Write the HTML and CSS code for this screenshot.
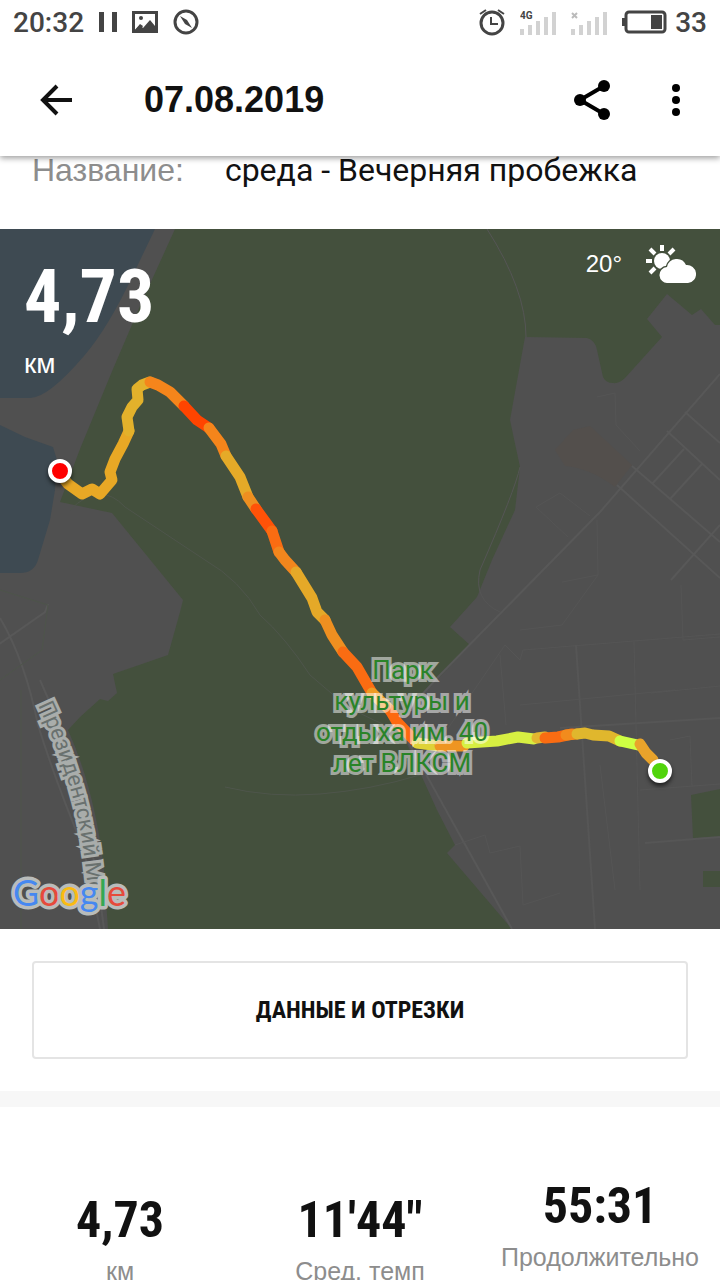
FILE: index.html
```html
<!DOCTYPE html>
<html lang="ru">

<head>
    <meta charset="UTF-8">
    <meta name="viewport" content="width=device-width, initial-scale=1.0">
    <title>07.08.2019</title>
    <link rel="stylesheet" href="styles.css">
</head>

<body>

    <div class="screen">
        <div class="status-bar">
            <div class="status-group">
                <span>20:32</span>
                <svg width="18" height="26" viewBox="0 0 18 26"><path d="M0 3h5v20H0zM13 3h5v20h-5z" fill="#444"/></svg>
                <svg width="26" height="26" viewBox="0 0 26 26">
                    <path fill-rule="evenodd" d="M0 2h26v22H0zM3 5v16l5-5 3 3 7-8 5 6V5z" fill="#444"/>
                    <path d="M2 22l6-7 3 2-3 5z" fill="#444"/>
                    <circle cx="9" cy="9" r="2" fill="#444"/>
                </svg>
                <svg width="26" height="26" viewBox="0 0 26 26">
                    <circle cx="13" cy="13" r="11" fill="none" stroke="#444" stroke-width="3"/>
                    <path d="M7 7l7 4 5 8-7-4z" fill="#444"/>
                </svg>
            </div>
            <div class="status-group">
                <svg width="26" height="28" viewBox="0 0 26 28">
                    <circle cx="13" cy="15" r="11" fill="none" stroke="#444" stroke-width="3"/>
                    <path d="M12 9v7h7M1 6l6-4M25 6l-6-4" fill="none" stroke="#444" stroke-width="2"/>
                </svg>
                <svg width="36" height="26" viewBox="0 0 36 26">
                    <path d="M0 20h4v6H0zM8 16h4v10H8zM16 12h4v14h-4zM24 8h4v18h-4zM32 3h4v23h-4z" fill="#d2d2d2"/>
                    <text x="0" y="10" class="network">4G</text>
                </svg>
                <svg width="36" height="26" viewBox="0 0 36 26">
                    <path d="M0 20h4v6H0zM8 16h4v10H8zM16 12h4v14h-4zM24 8h4v18h-4zM32 3h4v23h-4z" fill="#d2d2d2"/>
                    <path d="M1 4l5 5M6 4L1 9" stroke="#bbb" stroke-width="2"/>
                </svg>
                <div class="battery">
                    <svg width="45" height="24" viewBox="0 0 45 24">
                        <rect x="4" y="2" width="39" height="20" rx="3" fill="none" stroke="#444" stroke-width="3"/>
                        <path d="M0 8h3v8H0zM29 5h11v14H29z" fill="#444"/>
                    </svg>
                    <span>33</span>
                </div>
            </div>
        </div>

        <header class="app-bar">
            <button class="icon-button" aria-label="Назад">
                <svg width="34" height="34" viewBox="0 0 34 34"><path d="M17 3L3 17l14 14M3 17h29" fill="none" stroke="#111" stroke-width="4"/></svg>
            </button>
            <h1>07.08.2019</h1>
            <button class="icon-button" aria-label="Поделиться">
                <svg width="36" height="40" viewBox="0 0 36 40">
                    <path d="M30 6L6 20l24 14" fill="none" stroke="#000" stroke-width="4"/>
                    <circle cx="30" cy="6" r="6"/>
                    <circle cx="6" cy="20" r="6"/>
                    <circle cx="30" cy="34" r="6"/>
                </svg>
            </button>
            <button class="icon-button menu-button" aria-label="Меню">
                <svg width="8" height="32" viewBox="0 0 8 32">
                    <circle cx="4" cy="4" r="4"/>
                    <circle cx="4" cy="16" r="4"/>
                    <circle cx="4" cy="28" r="4"/>
                </svg>
            </button>
        </header>

        <div class="run-name">
            <span class="run-label">Название:</span>
            <span class="run-value">среда - Вечерняя пробежка</span>
        </div>

        <div class="map">
            <svg class="map-canvas" viewBox="0 229 720 700">
                <rect y="229" width="720" height="700" fill="#505050"/>

                <!-- water -->
                <g fill="#3e4a52">
                    <path d="M0 229H155L132 277Q108 328 84 356 48 398 30 398H0z"/>
                    <path d="M0 425L25 437 53 447 57 460 55 490 50 520 38 560Q34 573 20 573H0z"/>
                </g>

                <!-- park -->
                <g fill="#44503d">
                    <path d="M175 229L140 306 113 369 80 449 60 502 112 513 183 600 180 612 168 655 113 674 117 693 108 701 100 699 80 717 68 730Q95 790 104 870L108 929H512L447 853 455 845 437 810 397 722 470 645 450 627 477 597 492 560 515 510 520 467 510 420 525 337 587 338Q595 340 597 350L603 377Q606 383 613 383 619 384 625 378L662 337 647 319 667 294 692 315 701 309 715 325H720V229z"/>
                    <path d="M691 795L720 789V837L693 838zM703 871H720V887H703z"/>
                </g>
                <path d="M555 450L573 430 590 426 632 465 615 487Q590 468 565 466z" fill="#534f4c"/>

                <!-- streets -->
                <g fill="none" stroke="#585858" stroke-width="2">
                    <path d="M720 374L600 512 440 675 397 722 512 929M685 412L720 443M667 431L720 480M632 466L720 542M617 485L720 578M684 449L652 484M702 464L670 499M671 580L720 525"/>
                    <path d="M0 618Q25 660 38 725 55 780 84 850L100 929M-2 645L45 612 48 604M40 680Q86 780 104 929"/>
                    <path d="M576 645L595 929M560 728L720 718M645 843L720 837" stroke="#565656"/>
                </g>
                <g fill="none" stroke="#555" stroke-width="1">
                    <path d="M487 229Q526 290 526 337M520 467Q515 490 480 570 473 600 500 612M597 397L615 393 616 425 640 451M536 507L560 493 590 516M536 507L568 537M597 520L598 575 562 582M598 575L562 625 520 630M440 740L505 645 520 660 523 650 720 634M500 655L506 725M634 642L640 890M520 705L675 690M600 765L615 890M640 790L720 784M455 845L485 835 490 853 520 846 523 905 560 893M681 585L683 640 720 637M651 693L720 686M670 740L690 736 692 787"/>
                    <path d="M70 510Q100 480 125 507L205 560Q240 580 260 615 285 637 310 675L345 705Q370 720 410 735M225 787Q270 798 320 794T420 775M21 690V929M0 590L48 605 42 650 0 680" stroke="#4e554b"/>
                </g>

                <!-- route -->
                <g class="route">
                    <path stroke="#e8a825" d="M60 474L68 484 82 494 92 489 100 494 112 480 110 472 115 459 123 444 129 431"/>
                    <path stroke="#e3b12b" d="M129 431L127 417 132 407 138 400 137 389 142 385 150 382"/>
                    <path stroke="#f5851b" d="M150 382L158 385 170 392 184 406"/>
                    <path stroke="#ff4400" d="M184 406L197 420 209 428"/>
                    <path stroke="#f5851b" d="M209 428L221 444 226 456"/>
                    <path stroke="#e5aa28" d="M226 456L240 477 248 497"/>
                    <path stroke="#ee8f20" d="M248 497L256 509"/>
                    <path stroke="#ff5208" d="M256 509L272 531"/>
                    <path stroke="#fa6c12" d="M272 531L279 552"/>
                    <path stroke="#f2861d" d="M279 552L285 560 296 572"/>
                    <path stroke="#e5a928" d="M296 572L304 585 312 598 317 612 325 620"/>
                    <path stroke="#ef8f20" d="M325 620L332 635 343 652"/>
                    <path stroke="#fa6c12" d="M343 652L357 667 372 693"/>
                    <path stroke="#ee9b24" d="M372 693L390 710"/>
                    <path stroke="#fd6910" d="M390 710L397 722 415 741"/>
                    <path stroke="#dfd237" d="M417 743L440 746"/>
                    <path stroke="#ee9522" d="M440 746H464"/>
                    <path stroke="#d7ef42" d="M467 743L497 741 518 737 534 739"/>
                    <path stroke="#e2b630" d="M537 738L545 737"/>
                    <path stroke="#fa6c12" d="M545 738L558 737 572 734"/>
                    <path stroke="#f28b1d" d="M566 735L577 734"/>
                    <path stroke="#e0b72d" d="M577 734L585 733 593 735 609 736 620 741"/>
                    <path stroke="#ceff43" d="M620 741L638 745"/>
                    <path stroke="#e9a32b" d="M640 744L646 753 653 760"/>
                </g>
                <g class="marker">
                    <circle cx="60" cy="471" r="10" fill="#fe0000"/>
                    <circle cx="660" cy="771" r="10" fill="#51d40c"/>
                </g>

                <g class="park-name">
                    <text x="403" y="679">Парк</text>
                    <text x="402" y="710">культуры и</text>
                    <text x="402" y="741">отдыха им. 40</text>
                    <text x="402" y="772">лет ВЛКСМ</text>
                </g>
                <path id="bridge" d="M38 705Q66 765 77 815 85 850 91 920" fill="none"/>
                <text class="street-name"><textPath href="#bridge">Президентский Мо</textPath></text>
                <text class="google" x="13" y="906"><tspan fill="#4688f1">G</tspan><tspan fill="#e64a3b">o</tspan><tspan fill="#fabb12">o</tspan><tspan fill="#4688f1">g</tspan><tspan fill="#34a853">l</tspan><tspan fill="#e64a3b">e</tspan></text>
            </svg>

            <div class="map-overlay">
                <div class="distance">
                    <div class="distance-value">4,73</div>
                    <div class="distance-unit">км</div>
                </div>
                <div class="weather">
                    <span>20°</span>
                    <svg width="50" height="38" viewBox="0 0 50 38">
                        <path d="M16 0v6M4 4l5 5M28 4l-5 5M0 16h6M4 28l5-5" stroke="#fff" stroke-width="4"/>
                        <circle cx="16" cy="16" r="8" fill="#fff"/>
                        <path d="M22 38a8 8 0 0 1-1-16 10 10 0 0 1 19-2 9 9 0 0 1 2 18z" fill="#fff" stroke="#44503d" stroke-width="3" paint-order="stroke"/>
                    </svg>
                </div>
            </div>
        </div>

        <div class="actions">
            <button class="details-button">ДАННЫЕ И ОТРЕЗКИ</button>
        </div>

        <div class="stats">
            <div class="stat">
                <div class="stat-value">4,73</div>
                <div class="stat-label">км</div>
            </div>
            <div class="stat">
                <div class="stat-value">11'44"</div>
                <div class="stat-label">Сред. темп</div>
            </div>
            <div class="stat stat-raised">
                <div class="stat-value">55:31</div>
                <div class="stat-label">Продолжительно</div>
            </div>
        </div>
    </div>

</body>

</html>
```
FILE: styles.css
```css
* {
    box-sizing: border-box;
    margin: 0;
    padding: 0;
}

body {
    font-family: "Liberation Sans", Arial, sans-serif;
    background-color: #fff;
    color: #111;
}

svg {
    display: block;
    flex-shrink: 0;
}

button {
    font: inherit;
    color: inherit;
    background: none;
    border: none;
    cursor: pointer;
}

.screen {
    height: 100vh;
    overflow: hidden;
}

.status-bar {
    position: relative;
    z-index: 1;
    display: flex;
    justify-content: space-between;
    height: 44px;
    padding: 0 13px;
    background-color: #fff;
    font-family: Roboto, sans-serif;
    font-size: 28px;
    font-weight: 500;
    color: #444;
}

.status-group {
    display: flex;
    align-items: center;
    gap: 15px;
}

.battery {
    display: flex;
    align-items: center;
    gap: 8px;
}

.network {
    font-size: 10px;
    font-weight: 700;
    fill: #444;
}

.app-bar {
    position: relative;
    display: flex;
    align-items: center;
    height: 112px;
    padding: 0 40px;
    background-color: #fff;
    box-shadow: 0 2px 6px rgba(0, 0, 0, 0.4);
}

.app-bar h1 {
    flex: 1;
    margin-left: 70px;
    font-size: 36px;
    font-weight: 700;
}

.menu-button {
    margin-left: 62px;
}

.run-name {
    display: flex;
    align-items: baseline;
    gap: 41px;
    height: 73px;
    padding: 0 32px;
    font-size: 32px;
    line-height: 28px;
    white-space: nowrap;
}

.run-label {
    color: #8d8d8d;
}

.run-value {
    font-family: Roboto, sans-serif;
}

.map {
    position: relative;
    color: #fff;
}

.map-canvas {
    width: 100%;
    height: auto;
}

.map-overlay {
    position: absolute;
    top: 0;
    left: 0;
    right: 0;
    display: flex;
    justify-content: space-between;
    align-items: flex-start;
    padding: 16px 24px;
}

.distance-value {
    font-family: "Roboto Condensed", "Liberation Sans Narrow", sans-serif;
    font-size: 74px;
    font-weight: 700;
    line-height: 104px;
}

.distance-unit {
    font-size: 28px;
    line-height: 30px;
}

.weather {
    display: flex;
    align-items: center;
    gap: 24px;
    font-size: 24px;
}

.route {
    fill: none;
    stroke-width: 11;
    stroke-linecap: round;
    stroke-linejoin: round;
}

.marker {
    stroke: #fff;
    stroke-width: 4;
    filter: drop-shadow(0 3px 2px rgba(0, 0, 0, 0.6));
}

.park-name,
.street-name,
.google {
    font-family: Roboto, sans-serif;
    font-size: 26px;
    paint-order: stroke;
    stroke-width: 6;
}

.park-name {
    text-anchor: middle;
    fill: #2a8429;
    stroke: rgba(255, 255, 255, 0.5);
}

.street-name {
    font-size: 22px;
    fill: #69716f;
    stroke: #a9adab;
}

.google {
    font-family: Lato, sans-serif;
    font-size: 36px;
    stroke: #b9bcba;
    stroke-width: 7;
    stroke-linejoin: round;
}

.actions {
    padding: 32px;
    border-bottom: 16px solid #f7f7f7;
}

.details-button {
    display: block;
    width: 100%;
    height: 98px;
    border: 2px solid #e4e4e4;
    border-radius: 4px;
    font-family: "Roboto Condensed", "Liberation Sans Narrow", sans-serif;
    font-size: 24px;
    font-weight: 700;
}

.stats {
    display: grid;
    grid-template-columns: repeat(3, 1fr);
    align-items: center;
    padding: 65px 0 32px;
    text-align: center;
}

.stat-value {
    font-family: "Roboto Condensed", "Liberation Sans Narrow", sans-serif;
    font-size: 50px;
    font-weight: 700;
    line-height: 68px;
}

.stat-label {
    font-size: 25px;
    line-height: 34px;
    color: #8d8d8d;
}

.stat-raised {
    padding-bottom: 28px;
}
```
